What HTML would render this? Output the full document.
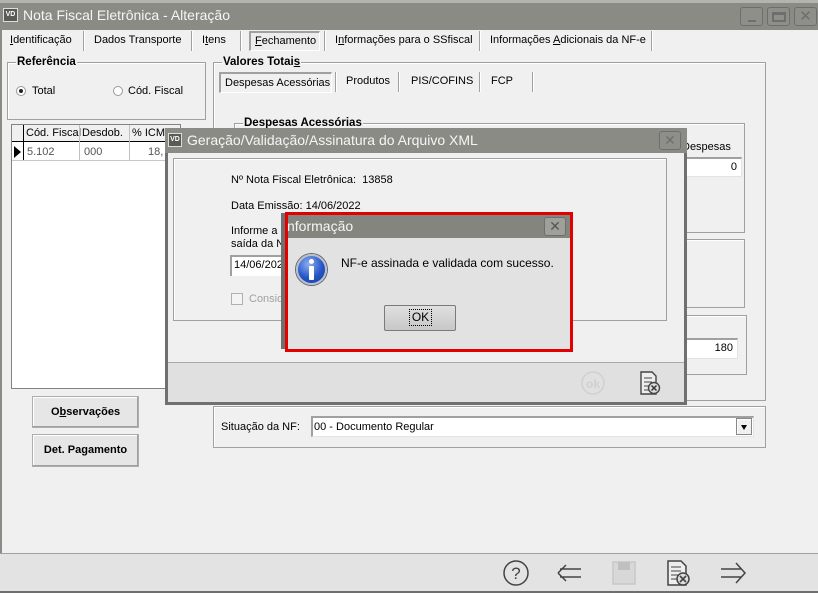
<!DOCTYPE html>
<html><head><meta charset="utf-8"><style>
*{margin:0;padding:0;box-sizing:border-box}
body{width:818px;height:593px;overflow:hidden;background:#f0f0f0;font-family:"Liberation Sans","DejaVu Sans",sans-serif;font-size:11px;color:#000;position:relative}
.a{position:absolute}
.t{position:absolute;white-space:nowrap}
.grp{position:absolute;border:1px solid #a0a0a0;box-shadow:inset 1px 1px 0 #fff}
.gl{position:absolute;background:#f0f0f0;font-weight:bold;padding:0 1px;font-size:11.5px;top:-7px;left:8px;line-height:13px}
.btn{position:absolute;background:#e6e6e6;border:1px solid #adadad;box-shadow:inset -1px -1px 0 #a0a0a0,inset 1px 1px 0 #fff;text-align:center;font-weight:bold}
.inp{position:absolute;background:#fff;border:1px solid #e3e3e3;border-top:2px solid #a0a0a0;border-left:2px solid #a0a0a0;text-align:right;padding-right:4px;line-height:16px}
.sep{position:absolute;width:1px;background:#a0a0a0;box-shadow:1px 0 0 #fff}
.tb{position:absolute;border:1px solid #6e6e6e;border-radius:3px;background:#8f8f89}
</style></head><body>
<div class="a" style="left:0;top:0;width:818px;height:3px;background:#b4b4ae"></div>
<div class="a" style="left:0;top:3px;width:818px;height:27px;background:#8b8b85"></div>
<div class="a" style="left:0;top:30px;width:2px;height:563px;background:#8b8b85"></div>
<div class="a" style="left:3px;top:8px;width:15px;height:14px;background:#5a5a56;border:1px solid #ddd;color:#fff;font-size:7px;font-weight:bold;line-height:12px;text-align:center">VD</div>
<div class="t" style="left:23px;top:7px;font-size:14px;color:#f5f5f5">Nota Fiscal Eletrônica - Alteração</div>
<div class="tb" style="left:740px;top:7px;width:23px;height:19px"><div class="a" style="left:7px;top:12px;width:8px;height:2px;background:#6e6e6e"></div></div>
<div class="tb" style="left:767px;top:7px;width:23px;height:19px"><div class="a" style="left:4px;top:4px;width:14px;height:10px;border:2px solid #6e6e6e;border-top-width:3px"></div></div>
<div class="tb" style="left:794px;top:7px;width:23px;height:19px;color:#6e6e6e;font-weight:bold;font-size:15px;text-align:center;line-height:17px">✕</div>

<div class="t" style="left:10px;top:34px"><u>I</u>dentificação</div>
<div class="sep" style="left:83px;top:31px;height:20px"></div>
<div class="t" style="left:94px;top:34px">Dados Transporte</div>
<div class="sep" style="left:191px;top:31px;height:20px"></div>
<div class="t" style="left:202px;top:34px">I<u>t</u>ens</div>
<div class="sep" style="left:240px;top:31px;height:20px"></div>
<div class="a" style="left:249px;top:31px;width:71px;height:20px;border:1px solid #fff;border-left:2px solid #a0a0a0;border-top:2px solid #a0a0a0;background:#ececec"></div>
<div class="t" style="left:255px;top:35px"><u>F</u>echamento</div>
<div class="sep" style="left:324px;top:31px;height:20px"></div>
<div class="t" style="left:335px;top:34px">I<u>n</u>formações para o SSfiscal</div>
<div class="sep" style="left:479px;top:31px;height:20px"></div>
<div class="t" style="left:490px;top:34px">Informações <u>A</u>dicionais da NF-e</div>
<div class="sep" style="left:651px;top:31px;height:20px"></div>

<div class="grp" style="left:7px;top:62px;width:199px;height:58px"><div class="gl">Referência</div></div>
<div class="a" style="left:16px;top:86px;width:10px;height:10px;border-radius:50%;border:1px solid #999;background:#fff"><div class="a" style="left:2px;top:2px;width:4px;height:4px;border-radius:50%;background:#222"></div></div>
<div class="t" style="left:32px;top:85px">Total</div>
<div class="a" style="left:113px;top:86px;width:10px;height:10px;border-radius:50%;border:1px solid #999;background:#fff"></div>
<div class="t" style="left:128px;top:85px">Cód. Fiscal</div>

<div class="a" style="left:11px;top:124px;width:170px;height:265px;background:#fff;border:1px solid #828282"></div>
<div class="a" style="left:12px;top:125px;width:168px;height:17px;background:#f0f0f0;border-bottom:1px solid #000"></div>
<div class="a" style="left:23px;top:125px;width:1px;height:36px;background:#000"></div>
<div class="t" style="left:26px;top:127px">Cód. Fiscal</div>
<div class="a" style="left:79px;top:125px;width:1px;height:36px;background:#c0c0c0"></div>
<div class="t" style="left:82px;top:127px">Desdob.</div>
<div class="a" style="left:129px;top:125px;width:1px;height:36px;background:#c0c0c0"></div>
<div class="t" style="left:132px;top:127px">% ICM</div>
<div class="a" style="left:12px;top:160px;width:168px;height:1px;background:#c8c8c8"></div>
<div class="a" style="left:14px;top:146px;width:0;height:0;border-left:7px solid #000;border-top:6px solid transparent;border-bottom:6px solid transparent"></div>
<div class="t" style="left:27px;top:146px;color:#555">5.102</div>
<div class="t" style="left:84px;top:146px;color:#555">000</div>
<div class="t" style="left:148px;top:146px;color:#555">18,</div>

<div class="grp" style="left:213px;top:62px;width:553px;height:339px"><div class="gl">Valores Totai<u>s</u></div></div>
<div class="a" style="left:219px;top:72px;width:113px;height:21px;border:1px solid #fff;border-left:2px solid #a0a0a0;border-top:2px solid #a0a0a0"></div>
<div class="t" style="left:225px;top:77px">Despesas Acessórias</div>
<div class="sep" style="left:335px;top:72px;height:20px"></div>
<div class="t" style="left:346px;top:75px">Produtos</div>
<div class="sep" style="left:398px;top:72px;height:20px"></div>
<div class="t" style="left:411px;top:75px">PIS/COFINS</div>
<div class="sep" style="left:479px;top:72px;height:20px"></div>
<div class="t" style="left:491px;top:75px">FCP</div>
<div class="sep" style="left:532px;top:72px;height:20px"></div>
<div class="grp" style="left:234px;top:123px;width:511px;height:110px"><div class="gl">Despesas Acessórias</div></div>
<div class="t" style="left:682px;top:141px">Despesas</div>
<div class="inp" style="left:684px;top:157px;width:58px;height:20px">0</div>
<div class="grp" style="left:234px;top:239px;width:511px;height:69px"></div>
<div class="grp" style="left:234px;top:315px;width:513px;height:60px"></div>
<div class="inp" style="left:684px;top:338px;width:54px;height:21px">180</div>

<div class="btn" style="left:32px;top:396px;width:107px;height:32px;line-height:30px">O<u>b</u>servações</div>
<div class="btn" style="left:32px;top:434px;width:107px;height:33px;line-height:31px">Det. Pa<u>g</u>amento</div>

<div class="grp" style="left:213px;top:406px;width:553px;height:42px"></div>
<div class="t" style="left:221px;top:421px">Situação da NF:</div>
<div class="a" style="left:311px;top:416px;width:443px;height:21px;background:#fff;border:1px solid #e3e3e3;border-top:2px solid #a0a0a0;border-left:2px solid #a0a0a0"></div>
<div class="t" style="left:314px;top:421px">00 - Documento Regular</div>
<div class="a" style="left:736px;top:418px;width:16px;height:17px;background:#f0f0f0;border:1px solid #888;box-shadow:inset 1px 1px 0 #fff"><div class="a" style="left:4px;top:6px;border-top:5px solid #000;border-left:3.5px solid transparent;border-right:3.5px solid transparent"></div></div>

<div class="a" style="left:0;top:553px;width:818px;height:40px;background:#e3e3e3;border-top:1px solid #a0a0a0;border-bottom:2px solid #6e6e6e"></div>
<svg class="a" style="left:500px;top:558px" width="260" height="32" viewBox="0 0 260 32" fill="none" stroke="#444" stroke-width="1.5">
<circle cx="16" cy="15" r="12"/><text x="16" y="21" font-size="17" text-anchor="middle" fill="#444" stroke="none" font-family="Liberation Sans">?</text>
<path d="M58 15l8-8M58 15l8 8M60 11h21M60 19h21"/>
<rect x="113" y="4" width="22" height="22" stroke="#c8c8c8" fill="#d8d8d8"/><rect x="118" y="4" width="12" height="8" fill="#c0c0c0" stroke="none"/>
<path d="M168 3h13l5 5v19h-18z" fill="#eee"/><path d="M171 9h10M171 13h10M171 17h7M171 21h7" stroke-width="1"/><circle cx="183" cy="21" r="6" fill="#ddd"/><path d="M180 18l6 6M186 18l-6 6" stroke-width="1.6"/>
<path d="M221 11h20M221 19h20M236 5l9 10-9 10" />
</svg>

<div class="a" style="left:165px;top:128px;width:522px;height:277px;background:#f0f0f0;border:3px solid #707070;border-top:none"></div>
<div class="a" style="left:165px;top:128px;width:522px;height:25px;background:#8b8b85"></div>
<div class="a" style="left:168px;top:133px;width:14px;height:14px;background:#5a5a56;border:1px solid #ddd;color:#fff;font-size:7px;font-weight:bold;line-height:12px;text-align:center">VD</div>
<div class="t" style="left:187px;top:132px;font-size:14px;color:#f5f5f5">Geração/Validação/Assinatura do Arquivo XML</div>
<div class="tb" style="left:659px;top:131px;width:22px;height:19px;color:#6e6e6e;font-weight:bold;font-size:14px;text-align:center;line-height:17px">✕</div>
<div class="grp" style="left:173px;top:158px;width:494px;height:163px"></div>
<div class="t" style="left:231px;top:174px">Nº Nota Fiscal Eletrônica:&nbsp;&nbsp;13858</div>
<div class="t" style="left:231px;top:200px">Data Emissão: 14/06/2022</div>
<div class="t" style="left:231px;top:225px">Informe a d</div>
<div class="t" style="left:231px;top:238px">saída da NF</div>
<div class="a" style="left:230px;top:255px;width:60px;height:21px;background:#fff;border-top:2px solid #a0a0a0;border-left:2px solid #a0a0a0"></div>
<div class="t" style="left:234px;top:259px">14/06/2022</div>
<div class="a" style="left:231px;top:293px;width:12px;height:12px;border:1px solid #b0b0b0;background:#f4f4f4"></div>
<div class="t" style="left:249px;top:293px;color:#a0a0a0">Conside</div>
<div class="a" style="left:168px;top:362px;width:516px;height:40px;background:#e0e0e0;border-top:1px solid #a8a8a8"></div>
<svg class="a" style="left:578px;top:369px" width="90" height="30" fill="none">
<circle cx="15" cy="14" r="11" stroke="#d0d0d0" stroke-width="1.5"/><text x="15" y="19" font-size="12" font-weight="bold" text-anchor="middle" fill="#d0d0d0" font-family="Liberation Sans">ok</text>
<path d="M63 3h11l4 4v18h-15z" fill="#eee" stroke="#444" stroke-width="1.4"/><path d="M66 9h8M66 13h8M66 17h6M66 21h5" stroke="#444"/><circle cx="76" cy="19" r="5.5" fill="#ddd" stroke="#444" stroke-width="1.4"/><path d="M73.5 16.5l5 5M78.5 16.5l-5 5" stroke="#333" stroke-width="1.5"/>
</svg>

<div class="a" style="left:281px;top:213px;width:8px;height:136px;background:#707070"></div>
<div class="a" style="left:285px;top:212px;width:288px;height:140px;background:#e2e2e2;border:3px solid #e20000"></div>
<div class="a" style="left:288px;top:215px;width:282px;height:23px;background:#85857f"></div>
<div class="t" style="left:287px;top:218px;font-size:14px;color:#f5f5f5">nformação</div>
<div class="tb" style="left:544px;top:217px;width:22px;height:19px;color:#555;font-weight:bold;font-size:14px;text-align:center;line-height:17px;background:#a0a09a">✕</div>
<div class="a" style="left:296px;top:254px;width:31px;height:31px;border-radius:50%;background:radial-gradient(circle at 40% 30%,#8fb0f0,#2456c8 55%,#163a9a);border:2px solid #b8c0d0;box-shadow:0 0 0 1px #666"></div>
<div class="a" style="left:309px;top:259px;width:5px;height:5px;border-radius:50%;background:#fff"></div>
<div class="a" style="left:309px;top:266px;width:5px;height:14px;border-radius:1px;background:#fff"></div>
<div class="t" style="left:341px;top:256px;font-size:12px">NF-e assinada e validada com sucesso.</div>
<div class="a" style="left:384px;top:305px;width:72px;height:26px;background:linear-gradient(#e0e0e0,#c8c8c8);border:1px solid #7a7a7a;border-radius:2px"></div>
<div class="a" style="left:409px;top:309px;width:23px;height:17px;border:1px dotted #000;text-align:center;line-height:15px;font-size:12px">OK</div>
</body></html>
